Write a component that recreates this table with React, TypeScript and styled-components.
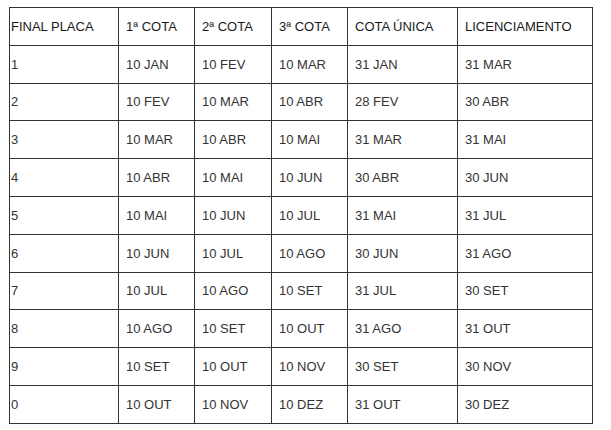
import React from "react";
import styled, { createGlobalStyle } from "styled-components";

const Global = createGlobalStyle`
  html, body { margin: 0; padding: 0; background: #fff; }
  body { font-family: "Liberation Sans", Arial, sans-serif; }
`;

const Page = styled.div`
  padding: 7px 0 0 9px;
`;

const Table = styled.table`
  border-collapse: collapse;
  table-layout: fixed;
  width: 583px;
  font-family: "Liberation Sans", Arial, sans-serif;
  font-size: 13px;
  color: #333;
`;

const Cell = styled.td<{ $first?: boolean }>`
  border: 1px solid #333;
  height: 36.8px;
  padding: 0 0 0 ${(p) => (p.$first ? "1px" : "7px")};
  vertical-align: middle;
  white-space: nowrap;
  font-weight: normal;
  text-align: left;
`;

const HeadCell = styled(Cell).attrs({ as: "th" })`
  color: #1a1a1a;
`;

const widths = [109, 76, 77, 76, 110, 135];

const headers = ["FINAL PLACA", "1ª COTA", "2ª COTA", "3ª COTA", "COTA ÚNICA", "LICENCIAMENTO"];

const rows: string[][] = [
  ["1", "10 JAN", "10 FEV", "10 MAR", "31 JAN", "31 MAR"],
  ["2", "10 FEV", "10 MAR", "10 ABR", "28 FEV", "30 ABR"],
  ["3", "10 MAR", "10 ABR", "10 MAI", "31 MAR", "31 MAI"],
  ["4", "10 ABR", "10 MAI", "10 JUN", "30 ABR", "30 JUN"],
  ["5", "10 MAI", "10 JUN", "10 JUL", "31 MAI", "31 JUL"],
  ["6", "10 JUN", "10 JUL", "10 AGO", "30 JUN", "31 AGO"],
  ["7", "10 JUL", "10 AGO", "10 SET", "31 JUL", "30 SET"],
  ["8", "10 AGO", "10 SET", "10 OUT", "31 AGO", "31 OUT"],
  ["9", "10 SET", "10 OUT", "10 NOV", "30 SET", "30 NOV"],
  ["0", "10 OUT", "10 NOV", "10 DEZ", "31 OUT", "30 DEZ"],
];

export default function App() {
  return (
    <>
      <Global />
      <Page>
        <Table>
          <colgroup>
            {widths.map((w, i) => (
              <col key={i} style={{ width: w }} />
            ))}
          </colgroup>
          <thead>
            <tr>
              {headers.map((h, i) => (
                <HeadCell key={h} $first={i === 0}>
                  {h}
                </HeadCell>
              ))}
            </tr>
          </thead>
          <tbody>
            {rows.map((r) => (
              <tr key={r[0]}>
                {r.map((c, i) => (
                  <Cell key={i} $first={i === 0}>
                    {c}
                  </Cell>
                ))}
              </tr>
            ))}
          </tbody>
        </Table>
      </Page>
    </>
  );
}
